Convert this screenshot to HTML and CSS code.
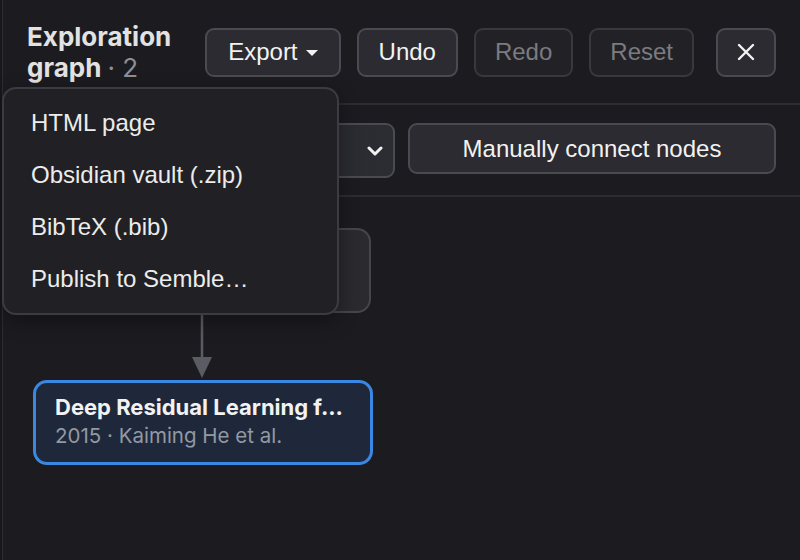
FILE: index.html
```html
<!DOCTYPE html>
<html lang="en">
  <head>
    <meta charset="UTF-8" />
    <meta name="viewport" content="width=device-width, initial-scale=1.0" />
    <title>Exploration graph</title>
    <link rel="stylesheet" href="styles.css">
  </head>
  <body>
    <div class="panel">
      <header class="panel-head">
        <h2 class="title">Exploration graph <span class="count">· 2</span></h2>
        <div class="actions">
          <button class="btn export">Export <span class="caret"></span></button>
          <button class="btn">Undo</button>
          <button class="btn" disabled>Redo</button>
          <button class="btn" disabled>Reset</button>
          <button class="btn close" aria-label="Close">
            <svg width="18" height="18" viewBox="0 0 18 18">
              <path d="M2 2 L16 16 M16 2 L2 16" stroke="#f2f2f2" stroke-width="2.4" stroke-linecap="round" />
            </svg>
          </button>
        </div>
      </header>

      <ul class="menu">
        <li>HTML page</li>
        <li>Obsidian vault (.zip)</li>
        <li>BibTeX (.bib)</li>
        <li>Publish to Semble…</li>
      </ul>

      <div class="toolbar">
        <div class="select">
          <span>Tree layout</span>
          <svg width="16" height="10" viewBox="0 0 16 10">
            <path d="M2 2 L8 8 L14 2" fill="none" stroke="#f2f2f2" stroke-width="3" stroke-linecap="round" stroke-linejoin="round" />
          </svg>
        </div>
        <button class="btn">Manually connect nodes</button>
      </div>

      <div class="canvas">
        <svg class="edges" width="400" height="200">
          <line x1="199" y1="116" x2="199" y2="162" stroke="#5b5b63" stroke-width="2.5" />
          <polygon points="189,160 209,160 199,181" fill="#5b5b63" />
        </svg>
        <div class="node" style="left: 30px; top: 31px;">
          <div class="node-title">Attention Is All You Need</div>
          <div class="node-sub">2017 · Ashish Vaswani et al.</div>
        </div>
        <div class="node selected" style="left: 30px; top: 183px;">
          <div class="node-title">Deep Residual Learning f...</div>
          <div class="node-sub">2015 · Kaiming He et al.</div>
        </div>
      </div>
    </div>
  </body>
</html>
```

FILE: styles.css
```css
html,
body {
  margin: 0;
  padding: 0;
  height: 100%;
  background: #18181b;
}
body {
  font-family: "Liberation Sans", Arial, sans-serif;
  color: #f0f0f0;
}
.panel {
  position: relative;
  margin-left: 2px;
  height: 100%;
  border-left: 1px solid #2c2c31;
  background: #1c1c20;
  display: flex;
  flex-direction: column;
}
.panel-head {
  display: flex;
  align-items: center;
  gap: 18px;
  padding: 21px 24px 20px 24px;
  border-bottom: 2px solid #2c2c31;
}
.title {
  flex: 1;
  min-width: 0;
  margin: 0;
  font-family: Inter, "Noto Sans", sans-serif;
  font-size: 26px;
  font-weight: 700;
  line-height: 31px;
  color: #e2e2e2;
}
.count {
  font-weight: 400;
  color: #8f8f94;
}
.actions {
  display: flex;
  align-items: center;
  gap: 16px;
}
.btn {
  height: 49px;
  padding: 0 20px;
  border: 2px solid #4a4a51;
  border-radius: 9px;
  background: #2b2b31;
  color: #f2f2f2;
  font-family: "Liberation Sans", Arial, sans-serif;
  font-size: 24px;
  display: flex;
  align-items: center;
  justify-content: center;
  cursor: pointer;
}
.btn.export {
  padding: 0 21px;
}
.btn:disabled {
  background: #222226;
  border-color: #38383d;
  color: #7b7b80;
  cursor: default;
  padding: 0 19px;
}
.caret {
  width: 0;
  height: 0;
  margin-left: 8px;
  margin-top: 2px;
  border-left: 6px solid transparent;
  border-right: 6px solid transparent;
  border-top: 6px solid #f2f2f2;
}
.close {
  width: 60px;
  padding: 0;
  margin-left: 6px;
}

.menu {
  position: absolute;
  left: -1px;
  top: 87px;
  z-index: 5;
  width: 333px;
  margin: 0;
  padding: 8px 0;
  list-style: none;
  background: #212125;
  border: 2px solid #3b3b41;
  border-radius: 14px;
  box-shadow: 0 6px 20px rgba(0, 0, 0, 0.35);
}
.menu li {
  height: 52px;
  line-height: 52px;
  padding-left: 27px;
  font-size: 24px;
  color: #ececec;
}

.toolbar {
  display: grid;
  grid-template-columns: 1fr 1fr;
  gap: 13px;
  padding: 18px 24px 17px 24px;
  border-bottom: 2px solid #2c2c31;
}
.select {
  height: 51px;
  border: 2px solid #4a4a51;
  border-radius: 9px;
  background: linear-gradient(90deg, #222227, #2c2c33);
  display: flex;
  align-items: center;
  justify-content: space-between;
  padding: 0 10px 0 18px;
  font-size: 22px;
}
.toolbar .btn {
  height: 51px;
}

.canvas {
  position: relative;
  flex: 1;
}
.edges {
  position: absolute;
  left: 0;
  top: 0;
}
.node {
  position: absolute;
  width: 298px;
  height: 57px;
  padding: 12px 18px;
  border: 2px solid #45454b;
  border-radius: 14px;
  background: linear-gradient(90deg, #232328, #2a2a2f);
  font-family: Inter, "Noto Sans", sans-serif;
}
.node.selected {
  border: 3px solid #3a88e4;
  background: #1e283a;
  padding: 11px 17px 11px 19px;
}
.node-title {
  font-size: 22px;
  font-weight: 700;
  line-height: 27px;
  color: #f2f2f2;
  white-space: nowrap;
  overflow: hidden;
}
.node-sub {
  font-size: 20.5px;
  line-height: 29px;
  color: #9299a3;
  white-space: nowrap;
}
```
